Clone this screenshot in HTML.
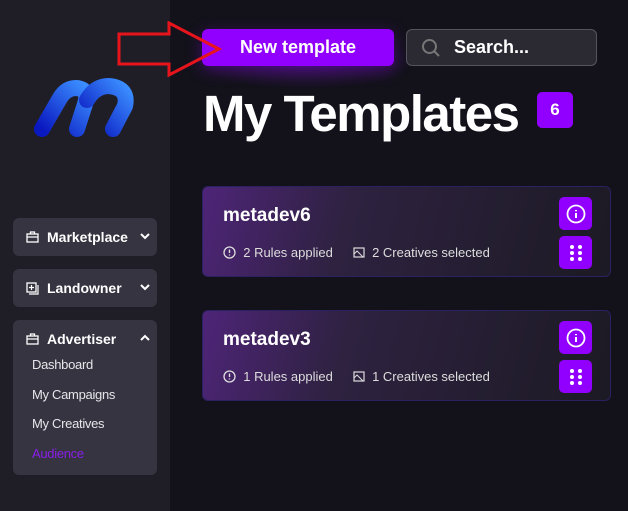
<!DOCTYPE html>
<html><head><style>
*{margin:0;padding:0;box-sizing:border-box}
body{width:628px;height:511px;background:#13121a;font-family:"Liberation Sans",sans-serif;position:relative;overflow:hidden;color:#fff}
.side{position:absolute;left:0;top:0;width:170px;height:511px;background:#1f1e26}
.grp{position:absolute;left:13px;width:144px;background:#353440;border-radius:6px}
.gh{height:38px;display:flex;align-items:center;padding-left:13px;font-weight:bold;font-size:14px}
.gh svg{margin-right:8px}
.chev{position:absolute;right:6px;top:12px}
.sub{font-size:13px;color:#e6e6ea;padding-left:19px;height:29.5px;line-height:29.5px;letter-spacing:-0.3px}
.btn{position:absolute;top:29px;height:37px;border-radius:6px;display:flex;align-items:center;font-weight:bold;font-size:18px}
.card{position:absolute;left:202px;width:409px;height:91px;border-radius:6px;border:1px solid #2a2160;background:linear-gradient(105deg,#4e2478 0%,#2e2240 35%,#1c1a24 100%)}
.card h3{position:absolute;left:20px;top:18px;font-size:19px;font-weight:bold}
.meta{position:absolute;left:20px;top:58px;font-size:13px;color:#ddd;display:flex;align-items:center}
.ib{position:absolute;left:356px;width:33px;height:33px;background:#9100ff;border-radius:5px;display:flex;align-items:center;justify-content:center}
</style></head><body>
<div class="side">
<svg style="position:absolute;left:33px;top:76px" width="106" height="64" viewBox="0 0 106 64"><defs><linearGradient id="g" x1="0" y1="1" x2="1" y2="0"><stop offset="0" stop-color="#0a18c0"/><stop offset="1" stop-color="#3a8cff"/></linearGradient></defs><path d="M9 53 L27 22 Q33 12 43 12 Q57 13 52 28 L44 53" fill="none" stroke="url(#g)" stroke-width="16" stroke-linecap="round" stroke-linejoin="round"/><path d="M54 24 Q62 10 76 10 Q96 12 92 30 L80 53" fill="none" stroke="url(#g)" stroke-width="16" stroke-linecap="round" stroke-linejoin="round"/></svg>
<div class="grp" style="top:218px;height:38px"><div class="gh"><svg width="13" height="12" viewBox="0 0 13 12"><rect x="1" y="3" width="11" height="8" fill="none" stroke="#fff" stroke-width="1.3"/><path d="M4.5 3V1h4v2M1 6h11" stroke="#fff" stroke-width="1.3" fill="none"/></svg>Marketplace</div><svg class="chev" width="12" height="12" viewBox="0 0 12 12"><path d="M2 4l4 4 4-4" stroke="#fff" stroke-width="2" fill="none"/></svg></div>
<div class="grp" style="top:269px;height:38px"><div class="gh"><svg width="13" height="13" viewBox="0 0 13 13"><rect x="1" y="1" width="9" height="9" fill="none" stroke="#fff" stroke-width="1.3"/><path d="M5.5 3v5M3 5.5h5M3 12h9V3" stroke="#fff" stroke-width="1.2" fill="none"/></svg>Landowner</div><svg class="chev" width="12" height="12" viewBox="0 0 12 12"><path d="M2 4l4 4 4-4" stroke="#fff" stroke-width="2" fill="none"/></svg></div>
<div class="grp" style="top:320px;height:155px"><div class="gh"><svg width="13" height="12" viewBox="0 0 13 12"><rect x="1" y="3" width="11" height="8" fill="none" stroke="#fff" stroke-width="1.3"/><path d="M4.5 3V1h4v2M1 6h11" stroke="#fff" stroke-width="1.3" fill="none"/></svg>Advertiser</div><svg class="chev" width="12" height="12" viewBox="0 0 12 12"><path d="M2 8l4-4 4 4" stroke="#fff" stroke-width="2" fill="none"/></svg>
<div style="margin-top:-8px"><div class="sub">Dashboard</div><div class="sub">My Campaigns</div><div class="sub">My Creatives</div><div class="sub" style="color:#8a1ee8">Audience</div></div></div>
</div>
<div style="position:absolute;left:195px;top:30px;width:220px;height:60px;background:radial-gradient(ellipse at center,rgba(120,20,200,.35),transparent 70%)"></div>
<div class="btn" style="left:202px;width:192px;background:#9100ff;justify-content:center;box-shadow:0 4px 16px rgba(145,0,255,.35)">New template</div>
<div class="btn" style="left:406px;width:191px;background:#2b2a33;border:1px solid #55545d;padding-left:14px"><svg width="20" height="20" viewBox="0 0 20 20" style="margin-right:13px"><circle cx="8.5" cy="8.5" r="6.5" fill="none" stroke="#777" stroke-width="2"/><path d="M13.5 13.5L18 18" stroke="#777" stroke-width="2"/></svg>Search...</div>
<svg style="position:absolute;left:117px;top:21px" width="106" height="56" viewBox="0 0 106 56"><path d="M2 13h50V2l50 26-50 26V43H2z" fill="none" stroke="#e8141c" stroke-width="3"/></svg>
<div style="position:absolute;left:203px;top:84px;font-size:51px;font-weight:bold;letter-spacing:-1.5px">My Templates</div>
<div style="position:absolute;left:537px;top:92px;width:36px;height:36px;background:#9100ff;border-radius:5px;text-align:center;line-height:36px;font-weight:bold;font-size:17px">6</div>
<div class="card" style="top:186px"><h3>metadev6</h3><div class="meta"><svg width="13" height="13" viewBox="0 0 13 13"><circle cx="6.5" cy="6.5" r="5.5" fill="none" stroke="#ddd" stroke-width="1.3"/><path d="M6.5 3.5v3.5M6.5 8.5v1" stroke="#ddd" stroke-width="1.4"/></svg>&nbsp; 2 Rules applied<span style="width:20px"></span><svg width="12" height="11" viewBox="0 0 12 11"><rect x="1" y="1" width="10" height="9" fill="none" stroke="#ddd" stroke-width="1.2"/><path d="M1 7l3-3 6 6" stroke="#ddd" fill="none"/></svg>&nbsp; 2 Creatives selected</div>
<div class="ib" style="top:10px"><svg width="20" height="20" viewBox="0 0 20 20"><circle cx="10" cy="10" r="8.5" fill="none" stroke="#fff" stroke-width="1.8"/><path d="M10 9v5M10 6v1.2" stroke="#fff" stroke-width="2"/></svg></div>
<div class="ib" style="top:49px"><svg width="14" height="18" viewBox="0 0 14 18"><g fill="#fff"><circle cx="3" cy="3" r="2"/><circle cx="11" cy="3" r="2"/><circle cx="3" cy="9" r="2"/><circle cx="11" cy="9" r="2"/><circle cx="3" cy="15" r="2"/><circle cx="11" cy="15" r="2"/></g></svg></div></div>
<div class="card" style="top:310px"><h3>metadev3</h3><div class="meta"><svg width="13" height="13" viewBox="0 0 13 13"><circle cx="6.5" cy="6.5" r="5.5" fill="none" stroke="#ddd" stroke-width="1.3"/><path d="M6.5 3.5v3.5M6.5 8.5v1" stroke="#ddd" stroke-width="1.4"/></svg>&nbsp; 1 Rules applied<span style="width:20px"></span><svg width="12" height="11" viewBox="0 0 12 11"><rect x="1" y="1" width="10" height="9" fill="none" stroke="#ddd" stroke-width="1.2"/><path d="M1 7l3-3 6 6" stroke="#ddd" fill="none"/></svg>&nbsp; 1 Creatives selected</div>
<div class="ib" style="top:10px"><svg width="20" height="20" viewBox="0 0 20 20"><circle cx="10" cy="10" r="8.5" fill="none" stroke="#fff" stroke-width="1.8"/><path d="M10 9v5M10 6v1.2" stroke="#fff" stroke-width="2"/></svg></div>
<div class="ib" style="top:49px"><svg width="14" height="18" viewBox="0 0 14 18"><g fill="#fff"><circle cx="3" cy="3" r="2"/><circle cx="11" cy="3" r="2"/><circle cx="3" cy="9" r="2"/><circle cx="11" cy="9" r="2"/><circle cx="3" cy="15" r="2"/><circle cx="11" cy="15" r="2"/></g></svg></div></div>
</body></html>
